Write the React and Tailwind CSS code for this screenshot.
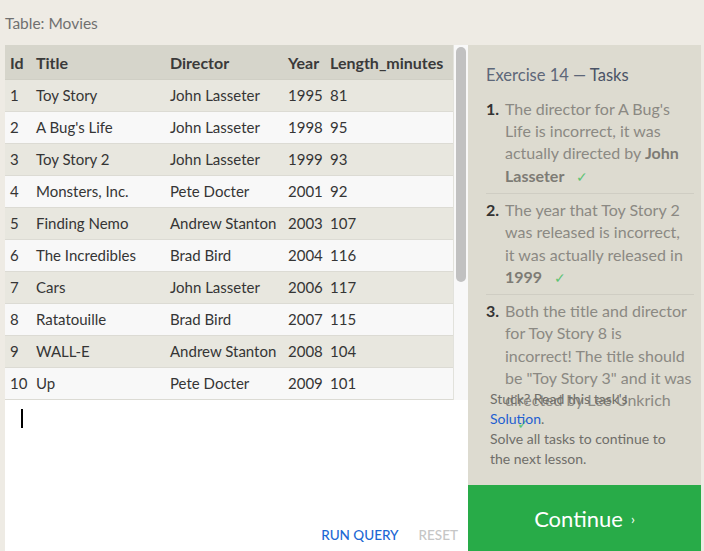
import React from "react";

const rows = [
  [1, "Toy Story", "John Lasseter", 1995, 81],
  [2, "A Bug's Life", "John Lasseter", 1998, 95],
  [3, "Toy Story 2", "John Lasseter", 1999, 93],
  [4, "Monsters, Inc.", "Pete Docter", 2001, 92],
  [5, "Finding Nemo", "Andrew Stanton", 2003, 107],
  [6, "The Incredibles", "Brad Bird", 2004, 116],
  [7, "Cars", "John Lasseter", 2006, 117],
  [8, "Ratatouille", "Brad Bird", 2007, 115],
  [9, "WALL-E", "Andrew Stanton", 2008, 104],
  [10, "Up", "Pete Docter", 2009, 101],
];

function Cells({ r }) {
  return (
    <>
      <div className="w-[26px] pl-[5px] whitespace-nowrap">{r[0]}</div>
      <div className="w-[134px] pl-[5px] whitespace-nowrap">{r[1]}</div>
      <div className="w-[118px] pl-[5px] whitespace-nowrap">{r[2]}</div>
      <div className="w-[42px] pl-[5px] whitespace-nowrap">{r[3]}</div>
      <div className="flex-1 pl-[5px] whitespace-nowrap">{r[4]}</div>
    </>
  );
}

function Check() {
  return <span className="ml-[12px] text-[14px] text-[#5fc374]">✓</span>;
}

export default function App() {
  return (
    <div
      className="w-[704px] h-[551px] overflow-hidden bg-[#eeebe4] flex flex-col"
      style={{ fontFamily: "Lato, 'Noto Sans', sans-serif" }}
    >
      <div className="h-[45px] shrink-0 pl-[5px] flex items-center text-[15.5px] text-[#707070] pt-[3px]">
        Table: Movies
      </div>
      <div className="flex flex-1 min-h-0">
        <div className="w-[463px] ml-[5px] flex flex-col">
          <div className="flex h-[355px] shrink-0">
            <div className="w-[448px] flex flex-col">
              <div className="h-[35px] pt-[1px] flex items-center bg-[#d6d5cb] text-[16px] font-bold text-[#3a3a3a] border-b border-[#d0cfc5]">
                <Cells r={["Id", "Title", "Director", "Year", "Length_minutes"]} />
              </div>
              {rows.map((r, i) => (
                <div
                  key={i}
                  className={
                    "h-[32px] flex items-center text-[15px] text-[#353535] border-b border-[#dcdbd4] " +
                    (i % 2 === 0 ? "bg-[#e8e7df]" : "bg-[#f8f8f8]")
                  }
                >
                  <Cells r={r} />
                </div>
              ))}
            </div>
            <div className="flex-1 bg-[#f8f8f8] border-l border-[#e2e2dc] pt-[2px] flex justify-center">
              <div className="w-[10px] h-[235px] rounded-full bg-[#c1c1c1]" />
            </div>
          </div>
          <div className="flex-1 bg-white flex flex-col">
            <div className="pl-[16px] pt-[9px]">
              <div className="w-[2px] h-[19px] bg-black" />
            </div>
            <div className="flex-1" />
            <div className="flex justify-end items-center gap-[20px] pr-[10px] pb-[6px] text-[13.5px] font-medium">
              <span className="text-[#1c68d4]">RUN QUERY</span>
              <span className="text-[#c6c6c6]">RESET</span>
            </div>
          </div>
        </div>
        <div className="w-[233px] bg-[#dddbd0] flex flex-col">
          <div className="flex-1 min-h-0 pl-[18px] pr-[7px] pt-[18px]">
            <div className="text-[16.5px] text-[#5d6779]">
              Exercise 14 — <span className="text-[#4a5366]">Tasks</span>
            </div>
            <ol className="mt-[10px] text-[16px] leading-[22.3px] text-[#8b8983] whitespace-nowrap">
              <li className="flex pb-[5px] border-b border-[#cfcdc3]">
                <span className="w-[19px] shrink-0 font-bold text-[#333]">1.</span>
                <span>
                  The director for A Bug's
                  <br />
                  Life is incorrect, it was
                  <br />
                  actually directed by <b className="text-[#7d7b75]">John</b>
                  <br />
                  <b className="text-[#7d7b75]">Lasseter</b>
                  <Check />
                </span>
              </li>
              <li className="flex pt-[5px] pb-[5px] border-b border-[#cfcdc3]">
                <span className="w-[19px] shrink-0 font-bold text-[#333]">2.</span>
                <span>
                  The year that Toy Story 2
                  <br />
                  was released is incorrect,
                  <br />
                  it was actually released in
                  <br />
                  <b className="text-[#7d7b75]">1999</b>
                  <Check />
                </span>
              </li>
              <li className="flex pt-[5px]">
                <span className="w-[19px] shrink-0 font-bold text-[#333]">3.</span>
                <span>
                  Both the title and director
                  <br />
                  for Toy Story 8 is
                  <br />
                  incorrect! The title should
                  <br />
                  be "Toy Story 3" and it was
                  <br />
                  directed by Lee Unkrich
                  <br />
                  <Check />
                </span>
              </li>
            </ol>
          </div>
          <div className="pl-[22px] pr-[10px] pb-[16px] text-[14px] leading-[20px] text-[#6f6e69] relative whitespace-nowrap">
            Stuck? Read this task's
            <br />
            <span className="text-[#1f5fd1]">Solution</span>.
            <br />
            Solve all tasks to continue to
            <br />
            the next lesson.
          </div>
          <div className="h-[66px] shrink-0 bg-[#28ab48] flex items-center justify-center text-white">
            <span className="text-[22px]">Continue</span>
            <span className="text-[14px] ml-[8px]">›</span>
          </div>
        </div>
        <div className="w-[3px]" />
      </div>
    </div>
  );
}
